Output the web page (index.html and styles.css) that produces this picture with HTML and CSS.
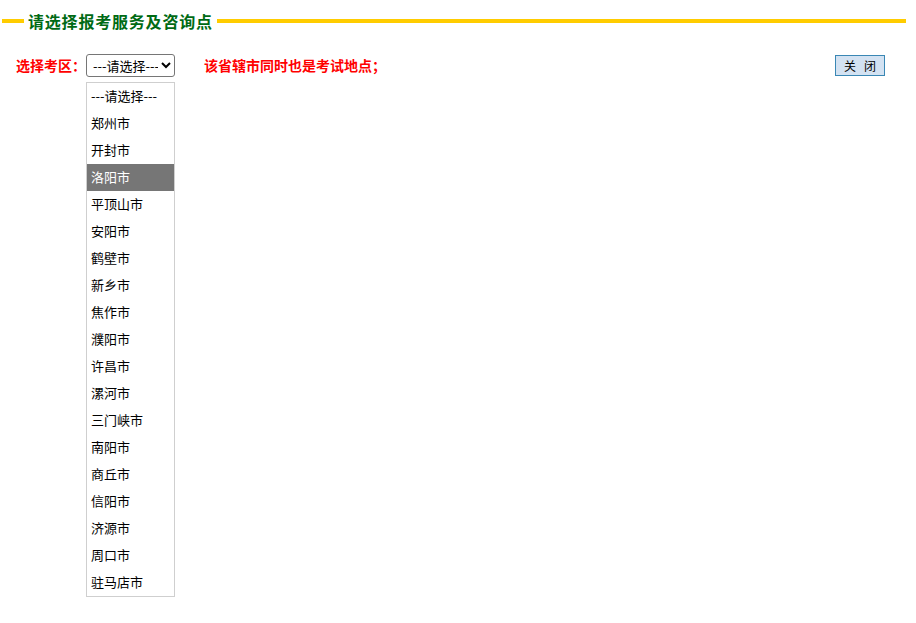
FILE: index.html
```html
<!DOCTYPE html>
<html lang="zh-CN">
<head>
    <meta charset="UTF-8" />
    <title>请选择报考服务及咨询点</title>
    <link rel="stylesheet" href="styles.css">
</head>
<body>
    <div class="title-bar">
        <span class="bar bar-left"></span>
        <h2 class="title">请选择报考服务及咨询点</h2>
        <span class="bar bar-right"></span>
    </div>

    <div class="search-row">
        <label class="area-label" for="areaSelect">选择考区：</label>
        <div class="select-wrap">
            <select id="areaSelect" class="area-select">
                <option>---请选择---</option>
            </select>
            <div class="city-list">
                <div class="city">---请选择---</div>
                <div class="city">郑州市</div>
                <div class="city">开封市</div>
                <div class="city active">洛阳市</div>
                <div class="city">平顶山市</div>
                <div class="city">安阳市</div>
                <div class="city">鹤壁市</div>
                <div class="city">新乡市</div>
                <div class="city">焦作市</div>
                <div class="city">濮阳市</div>
                <div class="city">许昌市</div>
                <div class="city">漯河市</div>
                <div class="city">三门峡市</div>
                <div class="city">南阳市</div>
                <div class="city">商丘市</div>
                <div class="city">信阳市</div>
                <div class="city">济源市</div>
                <div class="city">周口市</div>
                <div class="city">驻马店市</div>
            </div>
        </div>
        <span class="note">该省辖市同时也是考试地点；</span>
        <button type="button" class="close-btn">关&nbsp;&nbsp;&nbsp;闭</button>
    </div>
</body>
</html>
```

FILE: styles.css
```css
body {
    font-family: "Noto Sans CJK SC", "Liberation Sans", sans-serif;
    background-color: #fff;
    margin: 0;
    padding: 0;
}
.title-bar {
    display: flex;
    align-items: center;
    padding: 9px 10px 0 2px;
}
.bar {
    height: 4px;
    background-color: #ffcc00;
}
.bar-left {
    width: 22px;
}
.bar-right {
    flex: 1;
}
.title {
    margin: 0 4px;
    font-size: 16px;
    line-height: 24px;
    font-weight: bold;
    color: #006a14;
    letter-spacing: 0.8px;
}
.search-row {
    display: flex;
    align-items: flex-start;
    padding: 21px 31px 0 16px;
}
.area-label,
.note {
    font-size: 14px;
    line-height: 23px;
    font-weight: bold;
    color: #ff0000;
}
.select-wrap {
    display: flex;
    flex-direction: column;
    gap: 5px;
}
.area-select {
    width: 89px;
    height: 23px;
    font-family: "Noto Sans CJK SC", sans-serif;
    font-size: 13px;
    color: #000;
    border: 1px solid #767676;
    border-radius: 3px;
    background: #fff;
    padding: 0 0 0 2px;
    display: block;
}
.city-list {
    width: 87px;
    background: #fff;
    border: 1px solid #cfcfcf;
}
.city {
    height: 26px;
    line-height: 26px;
    padding-bottom: 1px;
    font-size: 13px;
    color: #000;
    padding-left: 4px;
    white-space: nowrap;
}
.city.active {
    background-color: #767676;
    color: #fff;
}
.note {
    margin-left: 29px;
}
.close-btn {
    margin: 1px 0 0 auto;
    width: 50px;
    height: 21px;
    padding: 0;
    font-family: "Noto Sans CJK SC", sans-serif;
    font-size: 12px;
    color: #000;
    background-color: #d3e2f2;
    border: 1px solid #3a87b4;
    cursor: pointer;
}
```
